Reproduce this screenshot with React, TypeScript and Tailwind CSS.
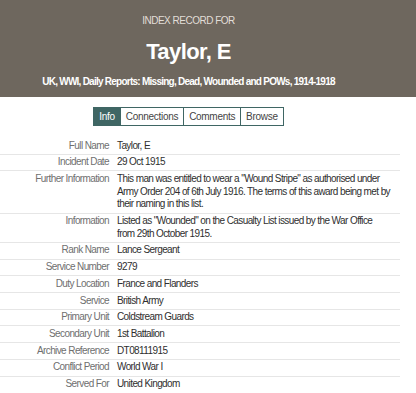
const rows: { label: string; value: string }[] = [
  { label: "Full Name", value: "Taylor, E" },
  { label: "Incident Date", value: "29 Oct 1915" },
  {
    label: "Further Information",
    value:
      'This man was entitled to wear a "Wound Stripe" as authorised under Army Order 204 of 6th July 1916. The terms of this award being met by their naming in this list.',
  },
  {
    label: "Information",
    value: 'Listed as "Wounded" on the Casualty List issued by the War Office from 29th October 1915.',
  },
  { label: "Rank Name", value: "Lance Sergeant" },
  { label: "Service Number", value: "9279" },
  { label: "Duty Location", value: "France and Flanders" },
  { label: "Service", value: "British Army" },
  { label: "Primary Unit", value: "Coldstream Guards" },
  { label: "Secondary Unit", value: "1st Battalion" },
  { label: "Archive Reference", value: "DT08111915" },
  { label: "Conflict Period", value: "World War I" },
  { label: "Served For", value: "United Kingdom" },
];

const tabs = ["Info", "Connections", "Comments", "Browse"];

export default function App() {
  return (
    <div className="min-h-screen bg-white" style={{ fontFamily: '"Liberation Sans", Arial, sans-serif' }}>
      <header className="h-[97px] bg-[#6e675e] w-[416px]">
        <div className="w-[377px] flex flex-col items-center pt-[14px]">
          <p className="text-[10px] leading-[13px] text-[#e2ded8] tracking-[-0.5px]">INDEX RECORD FOR</p>
          <h1 className="mt-[13px] text-[22px] leading-[24px] font-bold text-white tracking-[-0.6px]">Taylor, E</h1>
          <p className="mt-[11px] text-[10px] leading-[13px] font-bold text-white tracking-[-0.75px]">
            UK, WWI, Daily Reports: Missing, Dead, Wounded and POWs, 1914-1918
          </p>
        </div>
      </header>

      <div className="w-[377px] flex justify-center pt-[10px]">
        <div className="flex border border-[#3f6664]">
          {tabs.map((t, i) => (
            <span
              key={t}
              className={
                i === 0
                  ? "px-[5px] h-[17px] leading-[17px] text-[10px] tracking-[-0.3px] bg-[#3f6664] text-white"
                  : "px-[5px] h-[17px] leading-[17px] text-[10px] tracking-[-0.3px] bg-white text-[#444] border-l border-[#3f6664]"
              }
            >
              {t}
            </span>
          ))}
        </div>
      </div>

      <table className="mt-[12px] w-[400px] border-collapse text-[10px] leading-[12.7px] tracking-[-0.6px]">
        <tbody>
          {rows.map((r, i) => (
            <tr key={r.label} className={i === 0 ? "" : "border-t border-[#e6e6e6]"}>
              <td className="w-[117px] pr-[8px] py-[1.5px] text-right align-top text-[#6f6f6f] whitespace-nowrap">{r.label}</td>
              <td className="py-[1.5px] pr-[10px] align-top text-[#2f2f2f]">{r.value}</td>
            </tr>
          ))}
        </tbody>
      </table>
    </div>
  );
}
